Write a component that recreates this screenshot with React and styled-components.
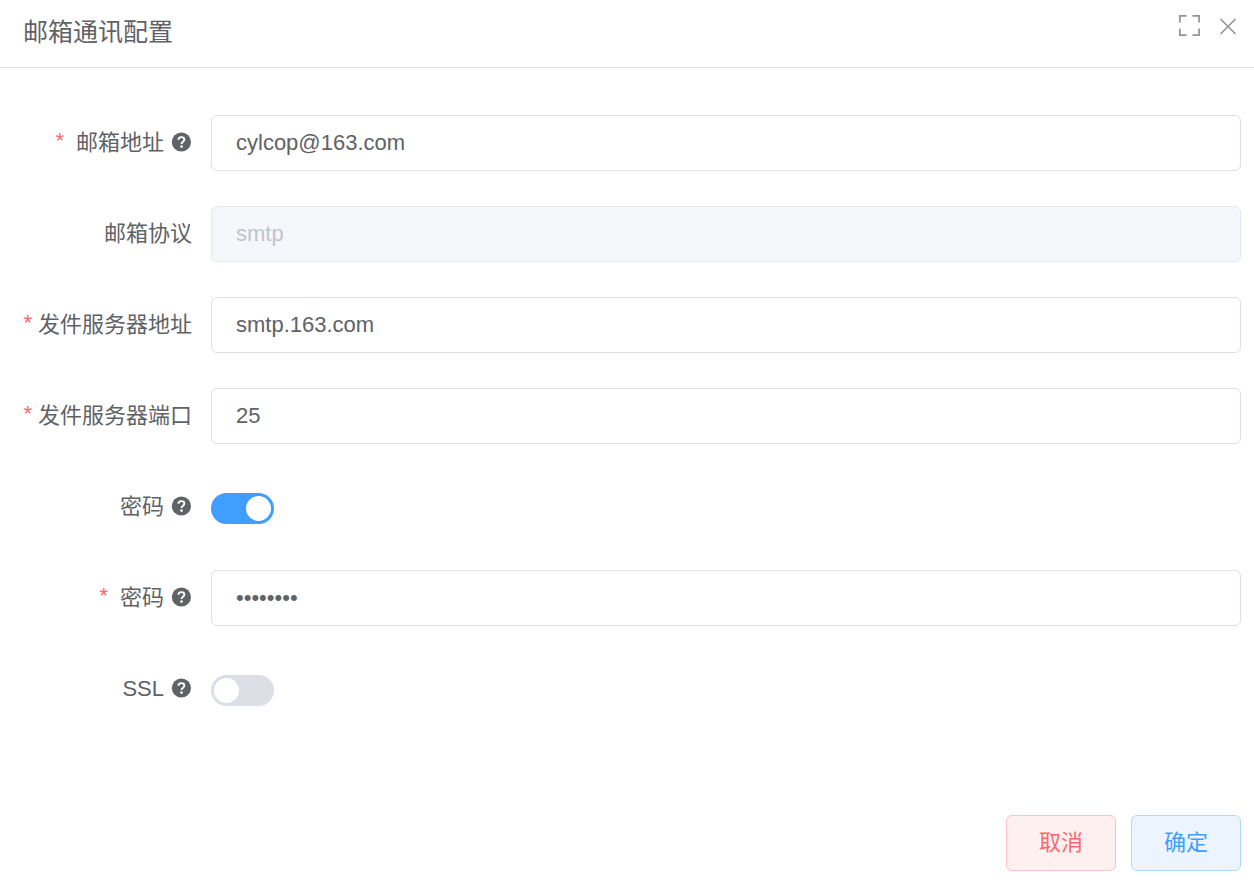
import React, { useState } from "react";
import styled, { createGlobalStyle } from "styled-components";

const GlobalStyle = createGlobalStyle`
  *, *::before, *::after { box-sizing: border-box; }
  body {
    margin: 0;
    background: #fff;
    color: #606266;
    font-family: "Liberation Sans", "Noto Sans CJK SC", sans-serif;
    font-size: 22px;
  }
  button, input { font: inherit; color: inherit; }
`;

const Dialog = styled.form`
  display: flex;
  flex-direction: column;
  min-height: 100vh;
`;

const Header = styled.header`
  display: flex;
  align-items: flex-start;
  justify-content: space-between;
  height: 68px;
  padding: 12px 17px 0 23px;
  border-bottom: 1px solid #dcdfe6;
`;

const Title = styled.h1`
  margin: 0;
  font-size: 25px;
  line-height: 40px;
  font-weight: 400;
`;

const HeaderActions = styled.div`
  display: flex;
  align-items: center;
  gap: 19px;
  padding-top: 2px;
`;

const IconButton = styled.button`
  display: flex;
  padding: 0;
  border: 0;
  background: none;
  color: #909399;
  cursor: pointer;
`;

const Body = styled.div`
  display: flex;
  flex-direction: column;
  gap: 35px;
  flex: 1;
  padding: 47px 13px 35px 0;
`;

const Row = styled.div`
  display: grid;
  grid-template-columns: 192px 1fr;
  column-gap: 19px;
  min-height: 56px;
`;

const LabelCell = styled.div`
  display: flex;
  align-items: center;
  justify-content: flex-end;
  height: 56px;
  line-height: 28px;
  white-space: nowrap;
`;

const Required = styled.span`
  margin: 0 ${(p) => (p.$wide ? 12 : 6)}px 4px 0;
  color: #f56c6c;
`;

const HelpIcon = styled.svg`
  width: 22px;
  height: 22px;
  margin: 0 0 2px 6px;
`;

const TextInput = styled.input`
  width: 100%;
  height: 56px;
  padding: 0 24px;
  border: 1px solid #dcdfe6;
  border-radius: 6px;
  outline: none;
  background: #fff;

  &:focus { border-color: #409eff; }
  &:disabled {
    border-color: #e4e7ed;
    background: #f5f7fa;
    color: #c0c4cc;
    cursor: not-allowed;
  }
`;

const Switch = styled.input.attrs({ type: "checkbox", role: "switch" })`
  appearance: none;
  display: flex;
  width: 63px;
  height: 31px;
  margin: 14px 0 0;
  padding: 3px;
  border-radius: 16px;
  background: #dcdfe6;
  cursor: pointer;

  &::before {
    content: "";
    width: 25px;
    height: 25px;
    border-radius: 50%;
    background: #fff;
  }
  &:checked {
    justify-content: flex-end;
    background: #409eff;
  }
`;

const Footer = styled.footer`
  display: flex;
  justify-content: flex-end;
  gap: 15px;
  padding: 0 13px 9px;
`;

const tones = {
  danger: { text: "#f56c6c", fill: "#fef0f0", line: "#fbc4c4" },
  primary: { text: "#409eff", fill: "#ecf5ff", line: "#b3d8ff" },
};

const Button = styled.button`
  height: 56px;
  padding: 0 32px;
  border: 1px solid ${(p) => tones[p.$tone].line};
  border-radius: 6px;
  background: ${(p) => tones[p.$tone].fill};
  color: ${(p) => tones[p.$tone].text};
  line-height: 28px;
  cursor: pointer;
`;

function Help() {
  return (
    <HelpIcon viewBox="0 0 22 22" aria-hidden="true">
      <circle cx="11.4" cy="11" r="9.6" fill="#606266" />
      <path
        d="M8.4 8.7c.1-1.6 1.3-2.6 3-2.6s3 1 3 2.5c0 2-2.9 2.1-2.9 4.3"
        fill="none"
        stroke="#fff"
        strokeWidth="1.9"
      />
      <circle cx="11.5" cy="15.6" r="1.3" fill="#fff" />
    </HelpIcon>
  );
}

function Field({ id, label, required, help, children }) {
  return (
    <Row>
      <LabelCell>
        {required && <Required $wide={help} aria-hidden="true">*</Required>}
        <label htmlFor={id}>{label}</label>
        {help && <Help />}
      </LabelCell>
      <div>{children}</div>
    </Row>
  );
}

export default function App() {
  const [values, setValues] = useState({
    address: "cylcop@163.com",
    host: "smtp.163.com",
    port: "25",
    usePassword: true,
    password: "password",
    ssl: false,
  });
  const text = (name) => ({
    id: name,
    value: values[name],
    onChange: (e) => setValues({ ...values, [name]: e.target.value }),
  });
  const toggle = (name) => ({
    id: name,
    checked: values[name],
    onChange: (e) => setValues({ ...values, [name]: e.target.checked }),
  });

  return (
    <>
      <GlobalStyle />
      <Dialog onSubmit={(e) => e.preventDefault()}>
        <Header>
          <Title>邮箱通讯配置</Title>
          <HeaderActions>
            <IconButton type="button" aria-label="全屏">
              <svg width="21" height="24" viewBox="0 0 21 24" fill="none" stroke="currentColor" strokeWidth="1.7">
                <path d="M.9 8.5V1.9h6.6M13.5 1.9h6.6v6.6M20.1 14.500v6.600h-6.600M7.500 21.100H.9v-6.600" />
              </svg>
            </IconButton>
            <IconButton type="button" aria-label="关闭">
              <svg width="18" height="24" viewBox="0 0 18 24" fill="none" stroke="currentColor" strokeWidth="1.6">
                <path d="M1.500 5l15 15M16.500 5l-15 15" />
              </svg>
            </IconButton>
          </HeaderActions>
        </Header>
        <Body>
          <Field id="address" label="邮箱地址" required help>
            <TextInput type="text" {...text("address")} />
          </Field>
          <Field id="protocol" label="邮箱协议">
            <TextInput id="protocol" type="text" value="smtp" disabled readOnly />
          </Field>
          <Field id="host" label="发件服务器地址" required>
            <TextInput type="text" {...text("host")} />
          </Field>
          <Field id="port" label="发件服务器端口" required>
            <TextInput type="text" {...text("port")} />
          </Field>
          <Field id="usePassword" label="密码" help>
            <Switch {...toggle("usePassword")} />
          </Field>
          <Field id="password" label="密码" required help>
            <TextInput type="password" autoComplete="off" {...text("password")} />
          </Field>
          <Field id="ssl" label="SSL" help>
            <Switch {...toggle("ssl")} />
          </Field>
        </Body>
        <Footer>
          <Button type="button" $tone="danger">取消</Button>
          <Button type="submit" $tone="primary">确定</Button>
        </Footer>
      </Dialog>
    </>
  );
}
